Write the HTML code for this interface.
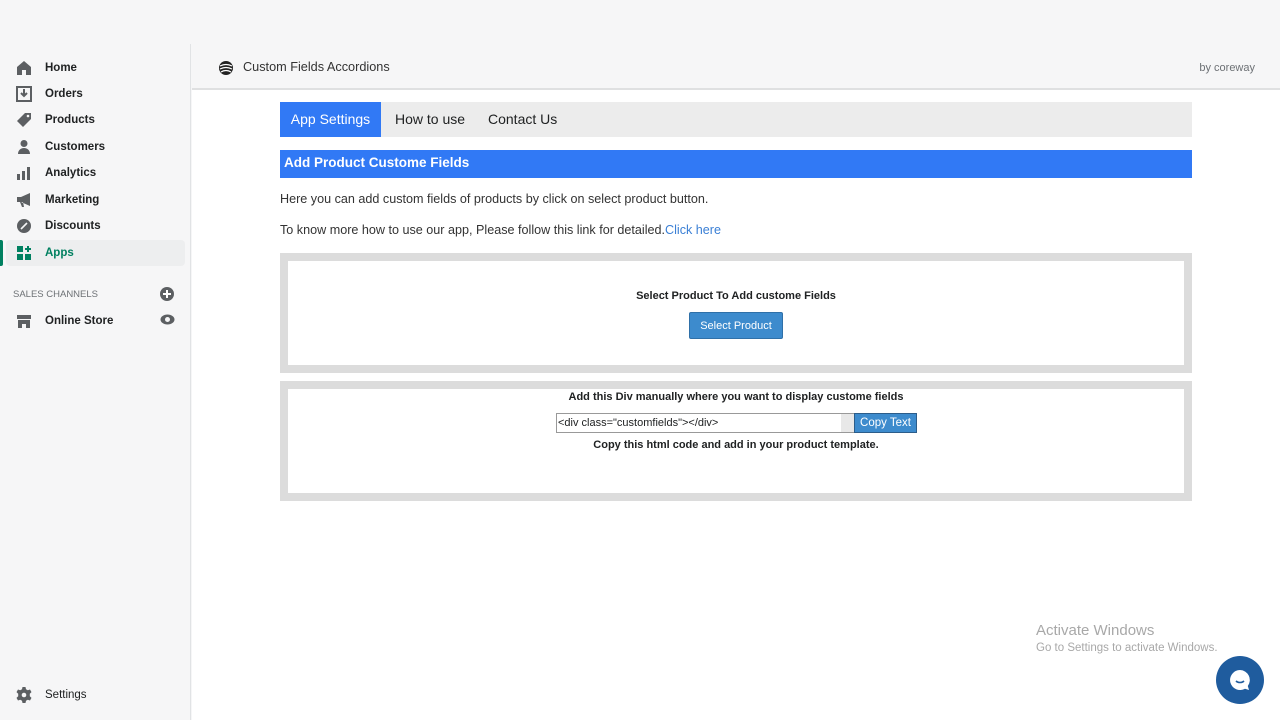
<!DOCTYPE html>
<html><head><meta charset="utf-8"><style>
*{box-sizing:border-box;margin:0;padding:0}
body{width:1280px;height:720px;background:#f6f6f7;font-family:"Liberation Sans",sans-serif;position:relative;overflow:hidden;color:#202223}
.side{position:absolute;left:0;top:44px;width:191px;height:676px;background:#f6f6f7;border-right:1px solid #e1e3e5}
.nav{position:absolute;left:6px;width:179px;height:26px;font-size:11.5px;font-weight:bold;color:#202223;display:flex;align-items:center}
.nav svg{position:absolute;left:10px}
.nav span{position:absolute;left:39px}
.main{position:absolute;left:192px;top:44px;width:1088px;height:676px;background:#fff}
.top{height:46px;background:#f6f6f7;border-bottom:2px solid #dfe0e1;position:relative}
.c{position:absolute;left:88px;width:912px}
</style></head><body>
<div class="side">
 <div class="nav" style="top:11px"><svg width="16" height="16" viewBox="0 0 16 16"><path d="M8 1L1 7v8h5v-5h4v5h5V7z" fill="#5c5f62"/></svg><span>Home</span></div>
 <div class="nav" style="top:37px"><svg width="16" height="16" viewBox="0 0 16 16"><path d="M1 1h14v14H1z" fill="none" stroke="#5c5f62" stroke-width="2"/><path d="M8 3v7M5 7l3 3 3-3" stroke="#5c5f62" stroke-width="2" fill="none"/></svg><span>Orders</span></div>
 <div class="nav" style="top:63px"><svg width="16" height="16" viewBox="0 0 16 16"><path d="M9 1h6v6l-8 8-6-6z" fill="#5c5f62"/><circle cx="12" cy="4" r="1.3" fill="#f6f6f7"/></svg><span>Products</span></div>
 <div class="nav" style="top:90px"><svg width="16" height="16" viewBox="0 0 16 16"><circle cx="8" cy="4.5" r="3.5" fill="#5c5f62"/><path d="M2 15c0-4 3-6 6-6s6 2 6 6z" fill="#5c5f62"/></svg><span>Customers</span></div>
 <div class="nav" style="top:116px"><svg width="16" height="16" viewBox="0 0 16 16"><rect x="1" y="9" width="3" height="6" fill="#5c5f62"/><rect x="6" y="6" width="3" height="9" fill="#5c5f62"/><rect x="11" y="2" width="3" height="13" fill="#5c5f62"/></svg><span>Analytics</span></div>
 <div class="nav" style="top:143px"><svg width="16" height="16" viewBox="0 0 16 16"><path d="M1 5h4l9-4v13l-9-4H1z M4 10l2 5h2l-1-5z" fill="#5c5f62"/></svg><span>Marketing</span></div>
 <div class="nav" style="top:169px"><svg width="16" height="16" viewBox="0 0 16 16"><circle cx="8" cy="8" r="7" fill="#5c5f62"/><path d="M5 11l6-6" stroke="#f6f6f7" stroke-width="1.6"/></svg><span>Discounts</span></div>
 <div class="nav" style="top:196px;background:#edeeef;border-radius:4px"><div style="position:absolute;left:-6px;top:0;width:3px;height:26px;background:#008060;border-radius:0 2px 2px 0"></div><svg width="16" height="16" viewBox="0 0 16 16"><rect x="1" y="1" width="6" height="6" fill="#008060"/><rect x="1" y="9" width="6" height="6" fill="#008060"/><rect x="9" y="9" width="6" height="6" fill="#008060"/><path d="M12 1v6M9 4h6" stroke="#008060" stroke-width="2"/></svg><span style="color:#008060">Apps</span></div>
 <div style="position:absolute;left:13px;top:245px;font-size:9.5px;color:#6d7175">SALES CHANNELS</div>
 <svg style="position:absolute;left:160px;top:243px" width="14" height="14" viewBox="0 0 14 14"><circle cx="7" cy="7" r="7" fill="#5c5f62"/><path d="M7 3v8M3 7h8" stroke="#fff" stroke-width="2"/></svg>
 <div class="nav" style="top:264px"><svg width="16" height="16" viewBox="0 0 16 16"><path d="M1 2h14v4H1zM2 7h12v8H10v-4H6v4H2z" fill="#5c5f62"/></svg><span>Online Store</span></div>
 <svg style="position:absolute;left:160px;top:270px" width="15" height="11" viewBox="0 0 15 11"><ellipse cx="7.5" cy="5.5" rx="7" ry="5" fill="#5c5f62"/><circle cx="7.5" cy="5.5" r="2.5" fill="#f6f6f7"/></svg>
 <div class="nav" style="top:638px"><svg width="16" height="16" viewBox="0 0 16 16"><path d="M6.5 0h3l.5 2.3 1.8 1 2.2-.8 1.5 2.6-1.7 1.6v2.6l1.7 1.6-1.5 2.6-2.2-.8-1.8 1-.5 2.3h-3L6 13.7l-1.8-1-2.2.8L.5 10.9l1.7-1.6V6.7L.5 5.1 2 2.5l2.2.8 1.8-1z" fill="#5c5f62"/><circle cx="8" cy="8" r="2.3" fill="#f6f6f7"/></svg><span style="font-weight:normal">Settings</span></div>
</div>
<div class="main">
 <div class="top">
  <svg style="position:absolute;left:26px;top:16px" width="16" height="16" viewBox="0 0 16 16"><circle cx="8" cy="8" r="7" fill="#222"/><path d="M2 6c4-2 8-2 12 0M2 9c4-2 8-2 12 0M3 12c3-2 7-2 10 0" stroke="#fff" stroke-width="1.2" fill="none"/></svg>
  <div style="position:absolute;left:51px;top:16px;font-size:12.7px;color:#333">Custom Fields Accordions</div>
  <div style="position:absolute;right:25px;top:18px;font-size:11px;color:#6d7175">by coreway</div>
 </div>
 <div class="c" style="top:58px;height:35px;background:#ececec">
  <div style="position:absolute;left:0;top:0;width:101px;height:35px;background:#3179f5;color:#fff;font-size:14px;line-height:35px;text-align:center">App Settings</div>
  <div style="position:absolute;left:115px;top:0;font-size:14px;line-height:35px">How to use</div>
  <div style="position:absolute;left:208px;top:0;font-size:14px;line-height:35px">Contact Us</div>
 </div>
 <div class="c" style="top:106px;height:28px;background:#3179f5;color:#fff;font-weight:bold;font-size:13.5px;line-height:26px;padding-left:4px">Add Product Custome Fields</div>
 <div class="c" style="top:148px;font-size:12.6px;color:#333">Here you can add custom fields of products by click on select product button.</div>
 <div class="c" style="top:179px;font-size:12.6px;color:#333">To know more how to use our app, Please follow this link for detailed.<span style="color:#3a7fd5">Click here</span></div>
 <div class="c" style="top:209px;height:120px;border:8px solid #dcdcdc;text-align:center">
  <div style="margin-top:29px;font-size:11px;font-weight:bold">Select Product To Add custome Fields</div>
  <div style="display:inline-block;margin-top:10px;width:94px;height:27px;background:#3d8bcd;border:1px solid #2f70a8;border-radius:2px;color:#fff;font-size:11px;line-height:26px">Select Product</div>
 </div>
 <div class="c" style="top:337px;height:120px;border:8px solid #dcdcdc;text-align:center">
  <div style="margin-top:2px;font-size:11px;font-weight:bold">Add this Div manually where you want to display custome fields</div>
  <div style="position:relative;height:22px;margin-top:10px">
   <div style="position:absolute;left:268px;top:0;width:299px;height:20px;border:1px solid #999;font-size:11px;text-align:left;line-height:18px;padding-left:1px;background:linear-gradient(to right,#fff 284px,#e8e8e8 284px)">&lt;div class="customfields"&gt;&lt;/div&gt;</div>
   <div style="position:absolute;left:566px;top:0;width:63px;height:20px;background:#3d8bcd;border:1px solid #2c5d8a;color:#fff;font-size:11.5px;line-height:18px">Copy Text</div>
  </div>
  <div style="margin-top:4px;font-size:11px;font-weight:bold">Copy this html code and add in your product template.</div>
 </div>
 <div style="position:absolute;left:844px;top:578px;font-size:15px;color:#a8a8a8">Activate Windows</div>
 <div style="position:absolute;left:844px;top:598px;font-size:11.5px;color:#a8a8a8">Go to Settings to activate Windows.</div>
 <div style="position:absolute;left:1024px;top:612px;width:48px;height:48px;border-radius:50%;background:#1f5c9e"><svg style="position:absolute;left:12px;top:12px" width="24" height="24" viewBox="0 0 24 24"><path d="M12 2a10 10 0 1 0 5 18.7L21 22l-1.2-4A10 10 0 0 0 12 2z" fill="#fff"/><path d="M8 13c2 2 6 2 8 0" stroke="#1f5c9e" stroke-width="1.6" fill="none"/></svg></div>
</div>
</body></html>
